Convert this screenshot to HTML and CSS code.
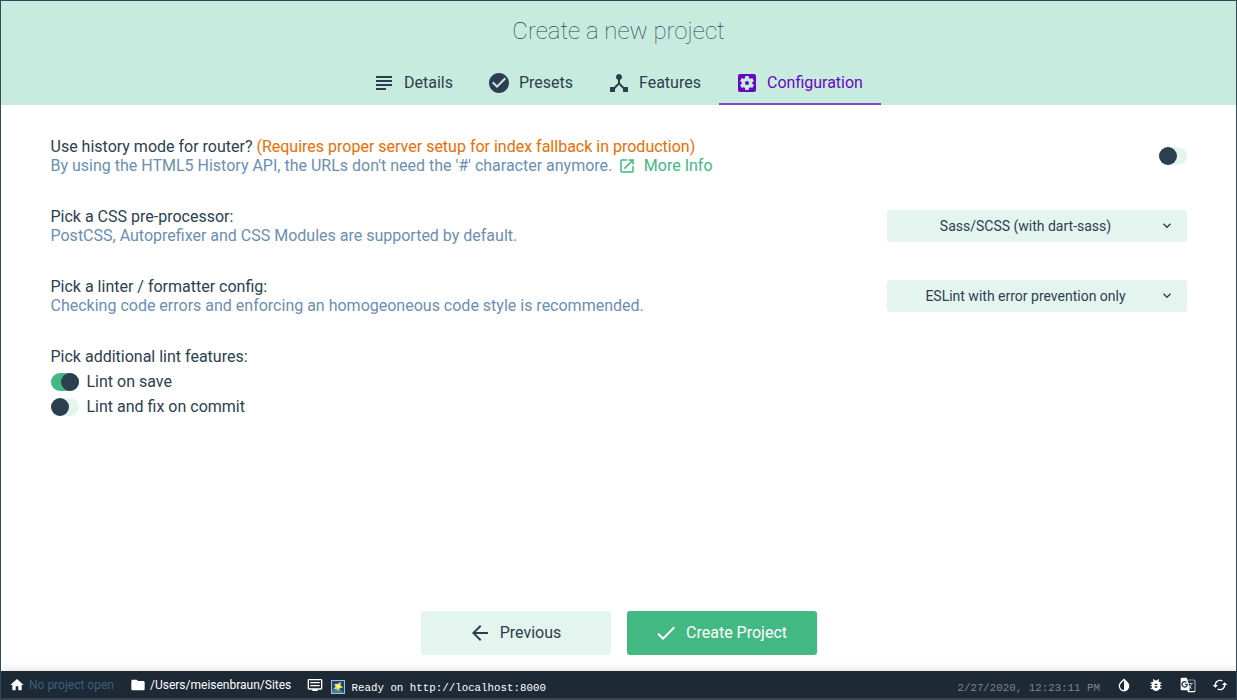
FILE: index.html
```html
<!DOCTYPE html>
<html lang="en">
<head>
<meta charset="utf-8">
<title>Create a new project</title>
<link rel="stylesheet" href="styles.css">
</head>
<body>
<div class="window">
  <header class="header">
    <h1 class="title">Create a new project</h1>
    <nav class="tabs">
      <a class="tab tab-details"><svg class="icon" viewBox="0 0 24 24"><path d="M4 5h16v2H4zM4 9h16v2H4zM4 13h16v2H4zM4 17h10v2H4z"/></svg><span>Details</span></a>
      <a class="tab tab-presets"><svg class="icon" viewBox="0 0 24 24"><path d="M12 2C6.480 2 2 6.480 2 12s4.480 10 10 10 10-4.480 10-10S17.520 2 12 2zm-2 15l-5-5 1.410-1.410L10 14.170l7.590-7.590L19 8l-9 9z"/></svg><span>Presets</span></a>
      <a class="tab tab-features"><svg class="icon" viewBox="0 0 24 24"><path d="M17 16l-4-4V8.820C14.160 8.400 15 7.300 15 6c0-1.660-1.340-3-3-3S9 4.340 9 6c0 1.300.84 2.400 2 2.820V12l-4 4H3v5h5v-3.050l4-4.200 4 4.200V21h5v-5h-4z"/></svg><span>Features</span></a>
      <a class="tab tab-config active"><svg class="icon" viewBox="0 0 24 24"><path d="M12 10c-1.100 0-2 .9-2 2s.9 2 2 2 2-.9 2-2-.9-2-2-2zm7-7H5c-1.110 0-2 .9-2 2v14c0 1.100.89 2 2 2h14c1.110 0 2-.9 2-2V5c0-1.100-.89-2-2-2zm-1.750 9c0 .23-.02.46-.05.68l1.480 1.160c.13.11.17.3.08.45l-1.400 2.420c-.09.15-.27.21-.43.15l-1.740-.7c-.36.28-.76.51-1.180.69l-.26 1.850c-.03.17-.18.3-.35.3h-2.800c-.17 0-.32-.13-.35-.29l-.26-1.850c-.43-.18-.82-.41-1.180-.69l-1.740.7c-.16.06-.34 0-.43-.15l-1.400-2.420c-.09-.15-.05-.34.08-.45l1.480-1.160c-.03-.23-.05-.46-.05-.69 0-.23.02-.46.05-.68l-1.480-1.160c-.13-.11-.17-.3-.08-.45l1.400-2.420c.09-.15.27-.21.43-.15l1.740.7c.36-.28.76-.51 1.180-.69l.26-1.850c.03-.17.18-.3.35-.3h2.800c.17 0 .32.13.35.29l.26 1.850c.43.18.82.41 1.180.69l1.740-.7c.16-.06.34 0 .43.15l1.400 2.420c.09.15.05.34-.08.45l-1.480 1.160c.03.23.05.46.05.69z"/></svg><span>Configuration</span></a>
    </nav>
  </header>

  <main class="content">
    <section class="prompt">
      <div>
        <div class="question"><span>Use history mode for router?</span> <span class="warning">(Requires proper server setup for index fallback in production)</span></div>
        <div class="description"><span>By using the HTML5 History API, the URLs don't need the '#' character anymore.</span><a class="more"><svg class="open-icon" viewBox="0 0 24 24"><path d="M19 19H5V5h7V3H5c-1.110 0-2 .9-2 2v14c0 1.100.89 2 2 2h14c1.100 0 2-.9 2-2v-7h-2v7zM14 3v2h3.590l-9.830 9.830 1.410 1.410L19 6.410V10h2V3h-7z"/></svg><span>More Info</span></a></div>
      </div>
      <span class="switch"></span>
    </section>
    <section class="prompt">
      <div>
        <div class="question">Pick a CSS pre-processor:</div>
        <div class="description">PostCSS, Autoprefixer and CSS Modules are supported by default.</div>
      </div>
      <div class="select"><span class="value">Sass/SCSS (with dart-sass)</span><svg class="chevron" viewBox="0 0 24 24"><path d="M7.410 7.840L12 12.420l4.590-4.580L18 9.250l-6 6-6-6z"/></svg></div>
    </section>
    <section class="prompt">
      <div>
        <div class="question">Pick a linter / formatter config:</div>
        <div class="description">Checking code errors and enforcing an homogeoneous code style is recommended.</div>
      </div>
      <div class="select"><span class="value">ESLint with error prevention only</span><svg class="chevron" viewBox="0 0 24 24"><path d="M7.410 7.840L12 12.420l4.590-4.580L18 9.250l-6 6-6-6z"/></svg></div>
    </section>
    <section class="lint">
      <div class="question">Pick additional lint features:</div>
      <div class="option"><span class="switch on"></span><span>Lint on save</span></div>
      <div class="option"><span class="switch"></span><span>Lint and fix on commit</span></div>
    </section>
  </main>

  <div class="actions">
    <button class="button"><svg class="icon" viewBox="0 0 24 24"><path d="M20 11H7.830l5.590-5.590L12 4l-8 8 8 8 1.410-1.410L7.830 13H20v-2z"/></svg><span>Previous</span></button>
    <button class="button primary"><svg class="icon" viewBox="0 0 24 24"><path d="M9 16.170L4.830 12l-1.420 1.410L9 19 21 7l-1.410-1.410z"/></svg><span>Create Project</span></button>
  </div>

  <footer class="status">
    <svg class="bar-icon" viewBox="0 0 24 24"><path d="M10 20v-6h4v6h5v-8h3L12 3 2 12h3v8z"/></svg>
    <span class="no-project">No project open</span>
    <svg class="bar-icon" viewBox="0 0 24 24"><path d="M10 4H4c-1.100 0-1.990.9-1.990 2L2 18c0 1.100.9 2 2 2h16c1.100 0 2-.9 2-2V8c0-1.100-.9-2-2-2h-8l-2-2z"/></svg>
    <span class="path">/Users/meisenbraun/Sites</span>
    <svg class="bar-icon" viewBox="0 0 24 24"><path d="M21 3H3c-1.100 0-2 .9-2 2v12c0 1.100.9 2 2 2h5v2h8v-2h5c1.100 0 2-.9 2-2V5c0-1.100-.9-2-2-2zm0 14H3V5h18v12zM19 7.500H5v2h14zM19 12H5v2h14z"/></svg>
    <svg class="emoji" viewBox="0 0 14 14"><path fill="#a9bfcc" d="M0 0h14v14H0z"/><path fill="#174a80" d="M1 1h12v12H1z"/><path fill="#3c82a5" d="M1 10l4-4 8 7H1z"/><path fill="#f5d93f" d="M3 4l3 0 4-2-.5 3.500L12 7.500 8.500 8.500 7.500 11 5.500 9 3 9l1.500-2.500z"/><path fill="#fff9b0" d="M5.500 5h2.500l1 2-2.500 1z"/></svg>
    <span class="mono">Ready on http://localhost:8000</span>
    <span class="mono date">2/27/2020, 12:23:11 PM</span>
    <div class="tools">
      <svg class="bar-icon" viewBox="0 0 24 24"><path d="M17.660 7.930L12 2.270 6.340 7.930c-3.120 3.120-3.120 8.190 0 11.310C7.900 20.800 9.950 21.580 12 21.580s4.100-.78 5.660-2.340c3.120-3.120 3.120-8.190 0-11.310zM12 19.590c-1.600 0-3.110-.62-4.240-1.760C6.620 16.690 6 15.190 6 13.590s.62-3.110 1.760-4.240L12 5.100v14.490z"/></svg>
      <svg class="bar-icon" viewBox="0 0 24 24"><path d="M20 8h-2.810c-.45-.78-1.070-1.450-1.820-1.960L17 4.410 15.590 3l-2.170 2.170a6 6 0 0 0-2.830 0L8.410 3 7 4.410l1.620 1.630C7.880 6.550 7.260 7.220 6.810 8H4v2h2.090c-.05.33-.09.66-.09 1v1H4v2h2v1c0 .34.04.67.09 1H4v2h2.810c1.040 1.790 2.970 3 5.190 3s4.150-1.210 5.190-3H20v-2h-2.090c.05-.33.09-.66.09-1v-1h2v-2h-2v-1c0-.34-.04-.67-.09-1H20V8zm-6 8h-4v-2h4v2zm0-4h-4v-2h4v2z"/></svg>
      <svg class="bar-icon" viewBox="0 0 24 24"><path d="M21 4H11l-1-3H3c-1.100 0-2 .9-2 2v15c0 1.100.9 2 2 2h8l1 3h9c1.100 0 2-.9 2-2V6c0-1.100-.9-2-2-2zM7 16c-2.760 0-5-2.240-5-5s2.240-5 5-5c1.350 0 2.480.5 3.350 1.300L9.030 8.570c-.38-.36-1.040-.78-2.030-.78-1.740 0-3.150 1.440-3.150 3.210S5.260 14.210 7 14.210c2.010 0 2.840-1.440 2.920-2.410H7v-1.710h4.680c.07.31.12.61.12 1.020C11.800 13.970 9.890 16 7 16zm6.170-5.420h3.700c-.43 1.250-1.110 2.430-2.050 3.470-.31-.35-.6-.72-.86-1.100l-.79-2.370zM21 21h-8.170L15 19l-1-3 .8-.8 2.600 2.600.7-.7-2.600-2.600c.9-1.100 1.900-2.500 2.400-3.900H20v-1h-3.500v-1h-1v1h-2.600L11.300 5H21c.55 0 1 .45 1 1v14c0 .55-.45 1-1 1z"/></svg>
      <svg class="bar-icon" viewBox="0 0 24 24"><path d="M19 8l-4 4h3c0 3.310-2.690 6-6 6-1.010 0-1.970-.25-2.800-.7l-1.460 1.460C8.970 19.540 10.430 20 12 20c4.420 0 8-3.580 8-8h3l-4-4zM6 12c0-3.310 2.690-6 6-6 1.010 0 1.970.25 2.800.7l1.460-1.460C15.030 4.460 13.570 4 12 4c-4.420 0-8 3.580-8 8H1l4 4 4-4H6z"/></svg>
    </div>
  </footer>
</div>
</body>
</html>
```
FILE: styles.css
```css
* { box-sizing: border-box; }
body { margin: 0; font: 16px/19px Roboto, sans-serif; color: #2c3e50; background: #fff; }
svg { fill: currentColor; flex: none; }
.window { width: 1237px; height: 700px; display: flex; flex-direction: column; border: 1px solid #34495a; border-bottom: 2px solid #38434f; background: #fff; overflow: hidden; }
.header { height: 104px; background: #c8ebdf; flex: none; }
.title { margin: 0; height: 60px; font-size: 24px; line-height: 60px; font-weight: 100; text-align: center; }
.tabs { display: flex; justify-content: center; height: 44px; }
.tab { display: flex; align-items: center; gap: 8px; height: 44px; padding: 2px 0 0 16px; border-bottom: 2px solid transparent; white-space: nowrap; }
.tab span { padding-bottom: 2px; }
.tab-details { width: 115px; }
.tab-presets { width: 120px; }
.tab-features { width: 128px; }
.tab-config { width: 162px; }
.tab.active { color: #6806c1; border-bottom-color: #8443cb; }
.icon { width: 24px; height: 24px; }
.content { flex: 1; padding: 32px 49px 0 49.5px; }
.prompt { display: flex; align-items: center; justify-content: space-between; height: 38px; margin-bottom: 32px; white-space: nowrap; }
.warning { color: #ea6e00; }
.description { display: flex; color: #6b8eb2; }
.more { display: flex; align-items: center; gap: 8px; margin-left: 5.5px; color: #42b983; }
.open-icon { width: 18px; height: 18px; }
.switch { display: flex; width: 28px; height: 18px; border-radius: 9px; background: #e4f5ef; }
.switch::before { content: ""; width: 18px; height: 18px; border-radius: 50%; background: #2c3e50; }
.switch.on { justify-content: flex-end; background: #42b983; }
.select { display: flex; align-items: center; width: 300px; height: 32px; padding-right: 12px; border-radius: 3px; background: #e4f5ef; font-size: 14px; }
.value { flex: 1; padding-left: 5px; text-align: center; }
.chevron { width: 16px; height: 16px; }
.option { display: flex; align-items: center; gap: 8px; height: 19px; margin-top: 6px; }
.actions { display: flex; justify-content: center; gap: 16px; height: 60px; flex: none; }
.button { display: flex; align-items: center; justify-content: center; gap: 8px; width: 190px; height: 44px; padding: 0 2px 1px 0; border: 0; border-radius: 3px; background: #e4f5ef; font: 16px/19px Roboto, sans-serif; color: #2c3e50; }
.primary { background: #42b983; color: #fff; }
.status { display: flex; align-items: center; height: 27px; flex: none; padding-left: 8px; background: #1d2935; color: #fff; font-size: 12px; line-height: 16px; white-space: nowrap; box-shadow: 0 -2px 10px rgba(0, 0, 0, .12); }
.bar-icon { width: 16px; height: 16px; }
.no-project { width: 101px; margin-left: 4px; color: #3f5f80; }
.path { width: 157px; margin-left: 4px; }
.emoji { width: 14px; height: 14px; margin: 4px 6.5px 0 8px; }
.mono { margin-top: 6px; font: 10.8px/14px "Liberation Mono", monospace; }
.date { margin-left: auto; color: #7d858c; }
.tools { display: flex; gap: 16px; margin: 0 8px 0 16px; }
```
